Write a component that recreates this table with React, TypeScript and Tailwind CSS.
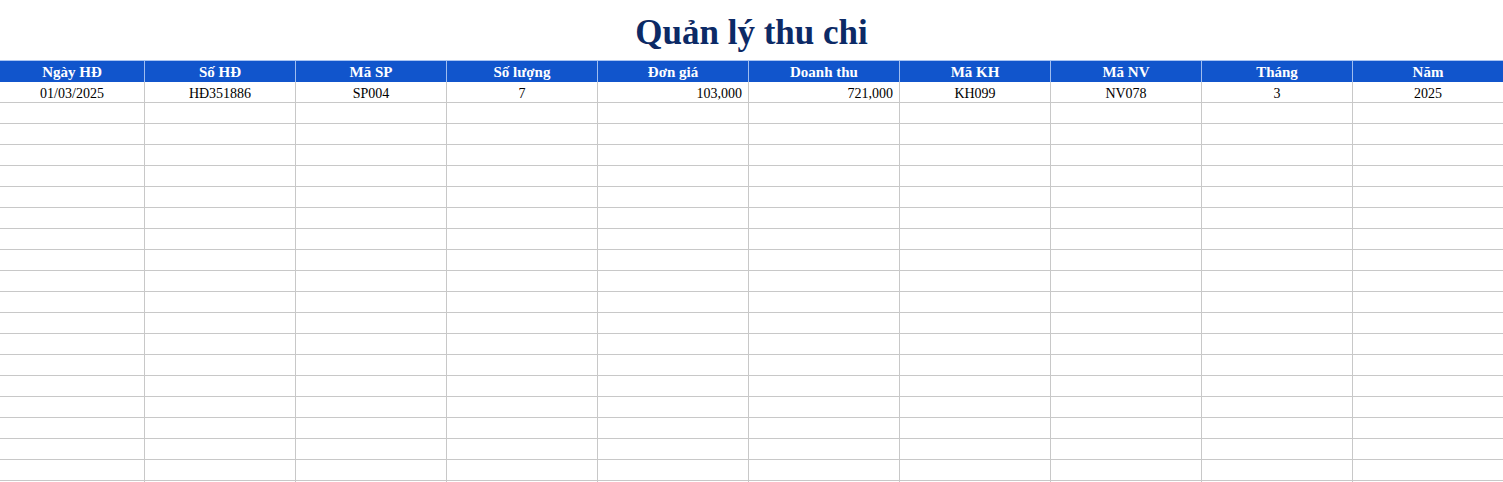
import React from "react";

const headers = [
  "Ngày HĐ",
  "Số HĐ",
  "Mã SP",
  "Số lượng",
  "Đơn giá",
  "Doanh thu",
  "Mã KH",
  "Mã NV",
  "Tháng",
  "Năm",
];

const firstRow = [
  { v: "01/03/2025", align: "center" },
  { v: "HĐ351886", align: "center" },
  { v: "SP004", align: "center" },
  { v: "7", align: "center" },
  { v: "103,000", align: "right" },
  { v: "721,000", align: "right" },
  { v: "KH099", align: "center" },
  { v: "NV078", align: "center" },
  { v: "3", align: "center" },
  { v: "2025", align: "center" },
];

const gridCols = "grid grid-cols-[145px_repeat(8,151px)_150px]";

export default function App() {
  const emptyRows = Array.from({ length: 19 });

  return (
    <div className="h-[482px] w-[1503px] overflow-hidden bg-white font-['Liberation_Serif','Times_New_Roman',serif]">
      <div className="flex h-[60px] items-center justify-center">
        <h1 className="pt-[4px] text-[35px] font-bold leading-none text-[#0c2a66]">
          Quản lý thu chi
        </h1>
      </div>

      <div className={`${gridCols} h-[22px] border-t border-[#a9c4f2] bg-[#1155cc]`}>
        {headers.map((h, i) => (
          <div
            key={i}
            className={`flex items-center justify-center pt-[1px] text-[15px] font-bold leading-none text-white ${
              i < headers.length - 1 ? "border-r border-[#9fbcef]" : ""
            }`}
          >
            {h}
          </div>
        ))}
      </div>

      <div className={`${gridCols} h-[21px] border-b border-[#c8c8c8]`}>
        {firstRow.map((c, i) => (
          <div
            key={i}
            className={`flex items-center px-[6px] pt-[3px] text-[14px] leading-none text-black ${
              c.align === "right" ? "justify-end" : "justify-center"
            } ${i < firstRow.length - 1 ? "border-r border-[#c8c8c8]" : ""}`}
          >
            {c.v}
          </div>
        ))}
      </div>

      {emptyRows.map((_, r) => (
        <div key={r} className={`${gridCols} h-[21px] border-b border-[#c8c8c8]`}>
          {headers.map((_, i) => (
            <div
              key={i}
              className={i < headers.length - 1 ? "border-r border-[#c8c8c8]" : ""}
            />
          ))}
        </div>
      ))}
    </div>
  );
}
